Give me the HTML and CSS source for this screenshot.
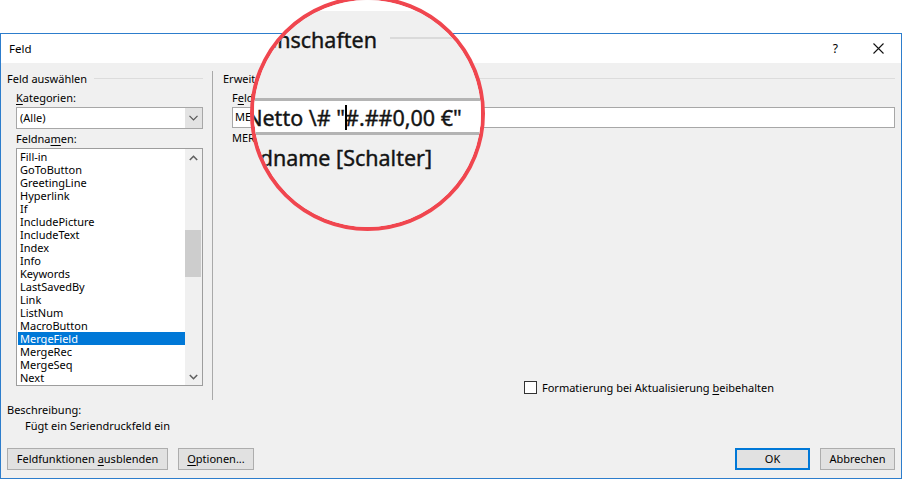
FILE: index.html
```html
<!DOCTYPE html>
<html lang="de">
<head>
<meta charset="utf-8">
<title>Feld</title>
<link rel="stylesheet" href="styles.css">
</head>
<body>
<div class="page">
  <div class="dialog">
    <div class="titlebar">
      <span class="title">Feld</span>
      <span class="tb-help">?</span>
      <span class="tb-close"><svg width="11" height="11" viewBox="0 0 11 11"><path d="M0.5 0.5L10.5 10.5M10.5 0.5L0.5 10.5" stroke="#111" stroke-width="1.1" fill="none"/></svg></span>
    </div>
    <div class="client">
      <div class="columns">
        <div class="col-left">
          <div class="group-head"><span>Feld auswählen</span><span class="rule"></span></div>
          <div class="indent">
            <div class="label"><u>K</u>ategorien:</div>
            <div class="combo">
              <span class="combo-text">(Alle)</span>
              <span class="combo-btn"><svg width="9" height="6" viewBox="0 0 9 6"><path d="M0.5 0.8L4.5 4.8L8.5 0.8" stroke="#555" stroke-width="1.2" fill="none"/></svg></span>
            </div>
            <div class="label label-gap">Feldna<u>m</u>en:</div>
            <div class="listbox">
              <ul class="items">
                <li>Fill-in</li>
                <li>GoToButton</li>
                <li>GreetingLine</li>
                <li>Hyperlink</li>
                <li>If</li>
                <li>IncludePicture</li>
                <li>IncludeText</li>
                <li>Index</li>
                <li>Info</li>
                <li>Keywords</li>
                <li>LastSavedBy</li>
                <li>Link</li>
                <li>ListNum</li>
                <li>MacroButton</li>
                <li class="selected">MergeField</li>
                <li>MergeRec</li>
                <li>MergeSeq</li>
                <li>Next</li>
              </ul>
              <div class="vscroll">
                <span class="sb-arrow"><svg width="9" height="6" viewBox="0 0 9 6"><path d="M0.8 5L4.5 1.3L8.2 5" stroke="#606060" stroke-width="1.6" fill="none"/></svg></span>
                <span class="sb-track"><span class="sb-thumb"></span></span>
                <span class="sb-arrow"><svg width="9" height="6" viewBox="0 0 9 6"><path d="M0.8 1L4.5 4.7L8.2 1" stroke="#606060" stroke-width="1.6" fill="none"/></svg></span>
              </div>
            </div>
          </div>
        </div>
        <div class="separator"></div>
        <div class="col-right">
          <div class="group-head"><span>Erweiterte Eigenschaften</span><span class="rule"></span></div>
          <div class="indent">
            <div class="label">F<u>e</u>ldfunktionen:</div>
            <div class="textbox">MERGEFIELD Netto \# "<span class="caret"></span>#.##0,00 €"</div>
            <div class="hint">MERGEFIELD Feldname [Schalter]</div>
          </div>
          <label class="check-row"><span class="checkbox"></span><span>Formatierung bei Aktualisierung <u>b</u>eibehalten</span></label>
        </div>
      </div>
      <div class="desc-title">Beschreibung:</div>
      <div class="desc-text">Fügt ein Seriendruckfeld ein</div>
      <div class="buttons">
        <div class="btn-group">
          <span class="btn btn-wide"><span>Feldfunktionen <u>a</u>usblenden</span></span>
          <span class="btn btn-opt"><span><u>O</u>ptionen...</span></span>
        </div>
        <div class="btn-group">
          <span class="btn btn-std btn-default"><span>OK</span></span>
          <span class="btn btn-std"><span>Abbrechen</span></span>
        </div>
      </div>
    </div>
  </div>

  <div class="magnifier">
    <div class="mag-view">
      <div class="mag-top"></div>
      <div class="mag-body">
        <div class="mag-head">
          <div class="mag-head-text"><span>Erweiterte Eigenschaften</span></div>
          <div class="mag-head-rule"></div>
        </div>
        <div class="mag-input">
          <div class="mag-pre"><span>MERGEFIELD Netto \# "</span></div>
          <span class="mag-caret"></span>
          <span class="mag-post">#.##0,00 €"</span>
        </div>
        <div class="mag-hint"><span>MERGEFIELD Feldname [Schalter]</span></div>
      </div>
    </div>
  </div>
</div>
</body>
</html>
```

FILE: styles.css
```css
html, body {
  margin: 0;
  padding: 0;
  background: #ffffff;
}

body {
  font-family: "Noto Sans", "Open Sans", sans-serif;
  font-size: 11px;
  color: #000;
}

u {
  text-decoration-thickness: 1px;
  text-underline-offset: 2px;
}

.page {
  position: relative;
  width: 902px;
  height: 479px;
  padding-top: 33px;
  box-sizing: border-box;
  overflow: hidden;
}

.dialog {
  width: 902px;
  height: 446px;
  box-sizing: border-box;
  border: 1px solid #2d7dcc;
  background: #ffffff;
  display: flex;
  flex-direction: column;
}

/* ---------- title bar ---------- */
.titlebar {
  height: 29px;
  flex: none;
  display: flex;
  align-items: center;
  padding: 0 17px 0 8px;
  background: #ffffff;
}

.title {
  flex: 1;
  font-size: 11.5px;
  line-height: 14px;
}

.tb-help {
  font-size: 12px;
  line-height: 14px;
}

.tb-close {
  margin-left: 35px;
  display: flex;
  align-items: center;
}

/* ---------- client area ---------- */
.client {
  flex: 1;
  background: #f0f0f0;
  padding: 8px 6px 7px 6px;
  display: flex;
  flex-direction: column;
}

.columns {
  height: 329px;
  display: flex;
  flex: none;
}

.col-left {
  width: 196px;
  flex: none;
  display: flex;
  flex-direction: column;
}

.separator {
  width: 1px;
  margin-left: 9px;
  background: #a9a9a9;
  flex: none;
}

.col-right {
  flex: 1;
  margin-left: 10px;
  display: flex;
  flex-direction: column;
}

.group-head {
  height: 15px;
  margin-bottom: -1px;
  line-height: 15px;
  display: flex;
  align-items: center;
  white-space: nowrap;
}

.group-head .rule {
  flex: 1;
  height: 1px;
  background: #dcdcdc;
  margin-left: 7px;
}

.indent {
  margin-left: 9px;
  display: flex;
  flex-direction: column;
}

.label {
  height: 14px;
  line-height: 14px;
  margin-top: 6px;
  white-space: nowrap;
}

.label-gap {
  margin-top: 3px;
}

/* combo box */
.combo {
  margin-top: 2px;
  height: 22px;
  box-sizing: border-box;
  border: 1px solid #a7a7a7;
  background: #ffffff;
  display: flex;
  align-items: center;
}

.combo-text {
  flex: 1;
  padding-left: 3px;
  line-height: 14px;
}

.combo-btn {
  width: 17px;
  height: 20px;
  background: #e3e3e3;
  display: flex;
  align-items: center;
  justify-content: center;
}

/* list box */
.listbox {
  margin-top: 2px;
  height: 238px;
  box-sizing: border-box;
  border: 1px solid #9d9d9d;
  background: #ffffff;
  display: flex;
}

.items {
  flex: 1;
  list-style: none;
  margin: 0;
  padding: 1px 0 0 1px;
}

.items li {
  height: 13px;
  line-height: 13px;
  padding-left: 2px;
  white-space: nowrap;
}

.items li.selected {
  background: #0078d7;
  color: #ffffff;
}

.vscroll {
  width: 17px;
  background: #f0f0f0;
  display: flex;
  flex-direction: column;
}

.sb-arrow {
  height: 17px;
  display: flex;
  align-items: center;
  justify-content: center;
  flex: none;
}

.sb-track {
  flex: 1;
  display: flex;
  flex-direction: column;
}

.sb-thumb {
  margin-top: 64px;
  height: 47px;
  margin-right: 1px;
  background: #cdcdcd;
}

/* right column */
.textbox {
  margin-top: 2px;
  height: 21px;
  box-sizing: border-box;
  border: 1px solid #a7a7a7;
  background: #ffffff;
  padding-left: 2px;
  line-height: 18px;
  white-space: nowrap;
}

.caret {
  display: inline-block;
  width: 1px;
  height: 14px;
  margin-right: -1px;
  background: #000;
  vertical-align: -3px;
}

.hint {
  margin-top: 3px;
  height: 14px;
  line-height: 14px;
  white-space: nowrap;
}

.check-row {
  margin-top: auto;
  margin-bottom: 6px;
  margin-left: 301px;
  height: 14px;
  display: flex;
  align-items: center;
  white-space: nowrap;
}

.checkbox {
  width: 13px;
  height: 13px;
  box-sizing: border-box;
  border: 1px solid #333333;
  background: #ffffff;
  margin-right: 5px;
  flex: none;
}

/* description */
.desc-title {
  margin-top: 3px;
  height: 14px;
  line-height: 14px;
}

.desc-text {
  margin-top: 2px;
  height: 14px;
  line-height: 14px;
  padding-left: 18px;
}

/* buttons */
.buttons {
  margin-top: 15px;
  height: 22px;
  display: flex;
  justify-content: space-between;
}

.btn-group {
  display: flex;
  gap: 10px;
}

.btn {
  height: 22px;
  box-sizing: border-box;
  border: 1px solid #adadad;
  background: #e1e1e1;
  display: flex;
  align-items: center;
  justify-content: center;
  line-height: 14px;
  white-space: nowrap;
}

.btn-wide {
  width: 161px;
}

.btn-opt {
  width: 76px;
}

.btn-std {
  width: 75px;
}

.btn-default {
  border: 2px solid #0078d7;
}

/* ---------- magnifier overlay ---------- */
.magnifier {
  position: absolute;
  left: 250px;
  top: -4px;
  width: 235px;
  height: 235px;
  box-sizing: border-box;
  border: 4px solid #f0464f;
  border-radius: 50%;
  overflow: hidden;
  background: #f0f0f0;
}

.mag-view {
  position: absolute;
  left: -254px;
  top: 0;
  width: 902px;
  height: 240px;
  display: flex;
  flex-direction: column;
  font-size: 21.5px;
  color: #141414;
  -webkit-text-stroke: 0.4px #141414;
}

.mag-top {
  height: 11px;
  flex: none;
  background: #ffffff;
}

.mag-body {
  flex: 1;
  background: #f0f0f0;
  display: flex;
  flex-direction: column;
}

.mag-head {
  margin-top: 15px;
  height: 28px;
  display: flex;
  align-items: center;
}

.mag-head-text {
  width: 377px;
  flex: none;
  display: flex;
  justify-content: flex-end;
  white-space: nowrap;
  line-height: 28px;
}

.mag-head-rule {
  flex: 1;
  height: 2px;
  margin-left: 13px;
  margin-top: -4px;
  background: #dadada;
}

.mag-input {
  margin-top: 44px;
  height: 37px;
  box-sizing: border-box;
  border-top: 3px solid #b4b4b4;
  border-bottom: 3px solid #b4b4b4;
  background: #ffffff;
  display: flex;
  align-items: center;
  padding-top: 2px;
  white-space: nowrap;
}

.mag-pre {
  width: 345px;
  flex: none;
  display: flex;
  justify-content: flex-end;
}

.mag-caret {
  width: 2px;
  height: 25px;
  margin-right: -2px;
  background: #000;
  flex: none;
  position: relative;
  z-index: 1;
}

.mag-post {
  flex: none;
}

.mag-hint {
  margin-top: 9px;
  width: 432px;
  height: 28px;
  line-height: 28px;
  display: flex;
  justify-content: flex-end;
  white-space: nowrap;
}
```
